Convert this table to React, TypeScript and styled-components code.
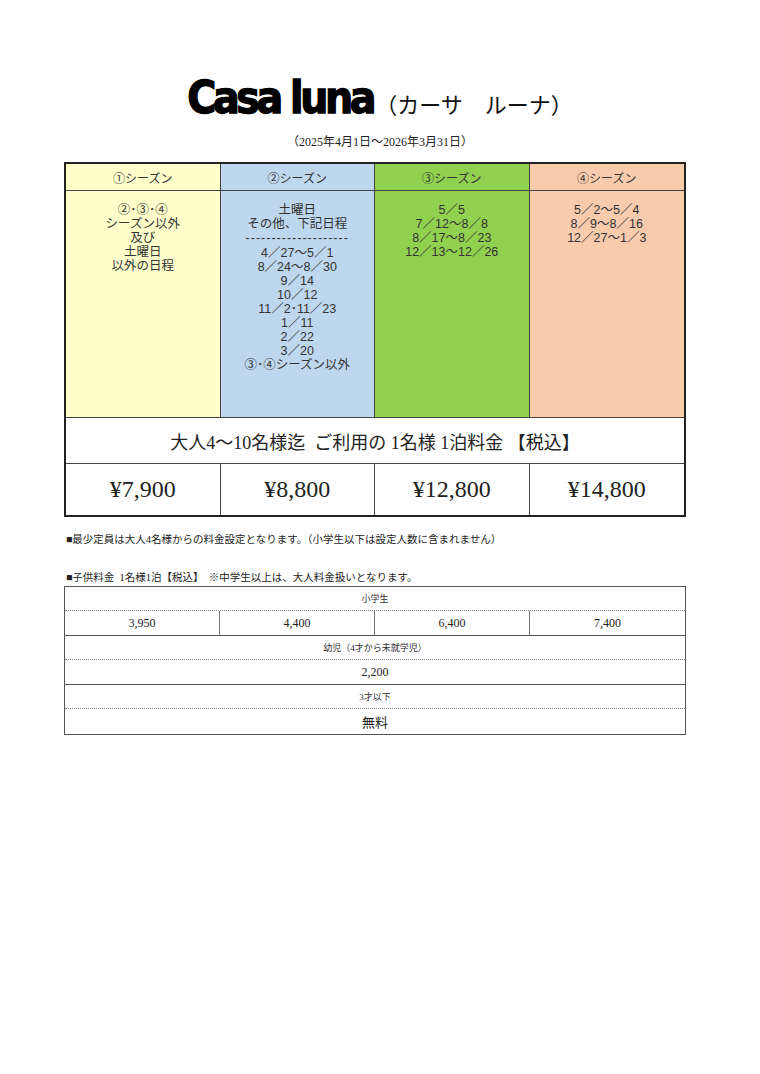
import React from 'react';
import styled, { createGlobalStyle } from 'styled-components';

const GlobalStyle = createGlobalStyle`
  html, body {
    margin: 0;
    padding: 0;
    background: #ffffff;
  }
  body {
    font-family: 'Noto Sans CJK JP', 'Noto Sans', sans-serif;
    color: #222;
  }
`;

const SERIF = `'Liberation Serif', 'Noto Sans CJK JP', serif`;
const GOTHIC = `'Noto Sans CJK JP', 'Noto Sans', sans-serif`;
const MIXED = `'Liberation Sans', 'Noto Sans CJK JP', sans-serif`;

type TSeason = {
  label: string;
  color: string;
  lines: string[];
  price: string;
};

const aSeasons: TSeason[] = [
  {
    label: '①シーズン',
    color: '#ffffcc',
    lines: ['②･③･④', 'シーズン以外', '及び', '土曜日', '以外の日程'],
    price: '¥7,900',
  },
  {
    label: '②シーズン',
    color: '#bdd7ee',
    lines: [
      '土曜日',
      'その他、下記日程',
      '--------------------',
      '4／27～5／1',
      '8／24～8／30',
      '9／14',
      '10／12',
      '11／2･11／23',
      '1／11',
      '2／22',
      '3／20',
      '③･④シーズン以外',
    ],
    price: '¥8,800',
  },
  {
    label: '③シーズン',
    color: '#92d050',
    lines: ['5／5', '7／12～8／8', '8／17～8／23', '12／13～12／26'],
    price: '¥12,800',
  },
  {
    label: '④シーズン',
    color: '#f8cbad',
    lines: ['5／2～5／4', '8／9～8／16', '12／27～1／3'],
    price: '¥14,800',
  },
];

const aKidPrices = ['3,950', '4,400', '6,400', '7,400'];

const App = () => {
  return (
    <Page>
      <GlobalStyle />
      <TitleRow>
        <Brand>Casa luna</Brand>
        <Kana>（カーサ　ルーナ）</Kana>
      </TitleRow>
      <Period>（2025年4月1日～2026年3月31日）</Period>

      <SeasonTable>
        {aSeasons.map((oSeason) => (
          <SeasonHead key={oSeason.label} $bg={oSeason.color}>
            {oSeason.label}
          </SeasonHead>
        ))}
        {aSeasons.map((oSeason) => (
          <SeasonBody key={oSeason.label} $bg={oSeason.color}>
            {oSeason.lines.map((sLine, i) =>
              sLine.startsWith('---') ? (
                <Dashes key={i}>{sLine}</Dashes>
              ) : (
                <div key={i}>{sLine}</div>
              ),
            )}
          </SeasonBody>
        ))}
        <Caption>大人4～10名様迄&nbsp;&nbsp;ご利用の 1名様 1泊料金 【税込】</Caption>
        {aSeasons.map((oSeason) => (
          <Price key={oSeason.label}>{oSeason.price}</Price>
        ))}
      </SeasonTable>

      <Note>■最少定員は大人4名様からの料金設定となります。（小学生以下は設定人数に含まれません）</Note>
      <KidsNote>■子供料金&nbsp;&nbsp;1名様1泊【税込】&nbsp;&nbsp;※中学生以上は、大人料金扱いとなります。</KidsNote>

      <KidsTable>
        <KidLabel>小学生</KidLabel>
        {aKidPrices.map((sPrice) => (
          <KidPrice key={sPrice}>{sPrice}</KidPrice>
        ))}
        <KidLabel>幼児（4才から未就学児）</KidLabel>
        <KidWide>2,200</KidWide>
        <KidLabel>3才以下</KidLabel>
        <KidWide $last $big>無料</KidWide>
      </KidsTable>
    </Page>
  );
};

const Page = styled.div`
  width: 760px;
  min-height: 1074px;
  padding-top: 74px;
  box-sizing: border-box;
`;

const TitleRow = styled.div`
  display: flex;
  justify-content: center;
  align-items: baseline;
`;

const Brand = styled.div`
  font-family: 'DejaVu Sans', sans-serif;
  font-stretch: condensed;
  font-weight: 900;
  font-size: 44px;
  letter-spacing: -3.4px;
  line-height: 48px;
  color: #000;
  -webkit-text-stroke: 1.3px #000;
  margin-right: 2px;
`;

const Kana = styled.div`
  font-family: ${GOTHIC};
  font-size: 22px;
  color: #111;
`;

const Period = styled.div`
  font-family: ${SERIF};
  font-size: 12px;
  text-align: center;
  margin-top: 10px;
  color: #222;
`;

const SeasonTable = styled.div`
  display: grid;
  grid-template-columns: repeat(4, 1fr);
  grid-template-rows: 27px 227px 46px 51px;
  width: 622px;
  margin: 12px 0 0 64px;
  border: 2px solid #222;
  box-sizing: border-box;
`;

const Cell = styled.div`
  border-right: 1px solid #444;
  border-bottom: 1px solid #444;
  box-sizing: border-box;

  &:nth-child(4n) {
    border-right: none;
  }
`;

const SeasonHead = styled(Cell)<{ $bg: string }>`
  background: ${(p) => p.$bg};
  font-family: ${GOTHIC};
  font-size: 12px;
  color: #333;
  display: flex;
  align-items: center;
  justify-content: center;
`;

const SeasonBody = styled(Cell)<{ $bg: string }>`
  background: ${(p) => p.$bg};
  font-family: ${MIXED};
  font-size: 12.5px;
  line-height: 14px;
  color: #333;
  text-align: center;
  padding-top: 12px;
`;

const Dashes = styled.div`
  letter-spacing: 1px;
  line-height: 15px;
  overflow: hidden;
  white-space: nowrap;
`;

const Caption = styled.div`
  grid-column: 1 / -1;
  border-bottom: 1px solid #444;
  display: flex;
  align-items: center;
  justify-content: center;
  font-family: ${SERIF};
  font-size: 18px;
  color: #222;
`;

const Price = styled.div`
  border-right: 1px solid #444;
  display: flex;
  align-items: center;
  justify-content: center;
  font-family: ${SERIF};
  font-size: 24px;
  color: #222;

  &:last-child {
    border-right: none;
  }
`;

const Note = styled.div`
  font-family: ${SERIF};
  font-size: 10.5px;
  line-height: 14px;
  margin: 16px 0 0 66px;
  color: #222;
`;

const KidsNote = styled(Note)`
  margin-top: 24px;
`;

const KidsTable = styled.div`
  display: grid;
  grid-template-columns: repeat(4, 1fr);
  width: 622px;
  margin: 1px 0 0 64px;
  border: 1px solid #555;
  box-sizing: border-box;
`;

const KidLabel = styled.div`
  grid-column: 1 / -1;
  height: 24px;
  box-sizing: border-box;
  display: flex;
  align-items: center;
  justify-content: center;
  font-family: ${SERIF};
  font-size: 9px;
  color: #333;
  border-bottom: 1px dotted #888;
`;

const KidPrice = styled.div`
  height: 25px;
  box-sizing: border-box;
  display: flex;
  align-items: center;
  justify-content: center;
  font-family: ${SERIF};
  font-size: 12px;
  color: #222;
  border-bottom: 1px solid #555;
  border-right: 1px solid #777;

  &:nth-child(5) {
    border-right: none;
  }
`;

const KidWide = styled.div<{ $last?: boolean; $big?: boolean }>`
  grid-column: 1 / -1;
  height: 25px;
  box-sizing: border-box;
  display: flex;
  align-items: center;
  justify-content: center;
  font-family: ${SERIF};
  font-size: ${(p) => (p.$big ? '13px' : '12px')};
  color: #222;
  border-bottom: ${(p) => (p.$last ? 'none' : '1px solid #555')};
`;

export default App;
